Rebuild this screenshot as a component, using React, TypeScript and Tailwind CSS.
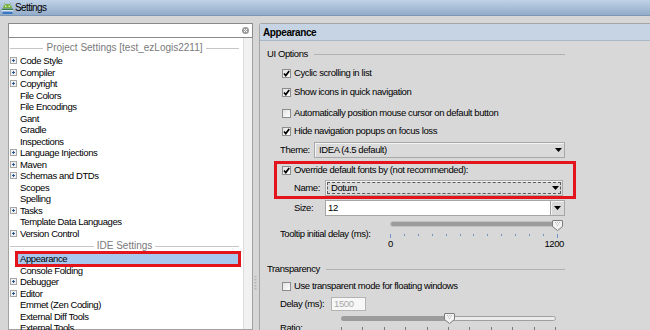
import React from 'react';

type Item = { label: string; expand?: boolean; selected?: boolean };

const projectItems: Item[] = [
  { label: 'Code Style', expand: true },
  { label: 'Compiler', expand: true },
  { label: 'Copyright', expand: true },
  { label: 'File Colors' },
  { label: 'File Encodings' },
  { label: 'Gant' },
  { label: 'Gradle' },
  { label: 'Inspections' },
  { label: 'Language Injections', expand: true },
  { label: 'Maven', expand: true },
  { label: 'Schemas and DTDs', expand: true },
  { label: 'Scopes' },
  { label: 'Spelling' },
  { label: 'Tasks', expand: true },
  { label: 'Template Data Languages' },
  { label: 'Version Control', expand: true },
];

const ideItems: Item[] = [
  { label: 'Appearance', selected: true },
  { label: 'Console Folding' },
  { label: 'Debugger', expand: true },
  { label: 'Editor', expand: true },
  { label: 'Emmet (Zen Coding)' },
  { label: 'External Diff Tools' },
  { label: 'External Tools' },
];

function AppIcon() {
  return (
    <svg width="13" height="13" viewBox="0 0 13 13" className="shrink-0">
      <path d="M2 7.2a4.5 4.3 0 0 1 9 0z" fill="#78b33a" />
      <path d="M3.6 2.4l1 1.2M9.4 2.4l-1 1.2" stroke="#5c8f26" strokeWidth="0.8" />
      <circle cx="4.8" cy="5.3" r="0.7" fill="#fff" />
      <circle cx="8.2" cy="5.3" r="0.7" fill="#fff" />
      <rect x="1" y="7.6" width="11" height="1.6" fill="#3f7a4f" />
      <rect x="1" y="9.2" width="11" height="1.4" fill="#eef3f8" />
      <rect x="1.5" y="10.6" width="10" height="2.4" fill="#3b78c4" />
    </svg>
  );
}

function Plus() {
  return (
    <svg width="7" height="7" viewBox="0 0 7 7" className="shrink-0">
      <rect x="0.5" y="0.5" width="6" height="6" fill="#f2f2f2" stroke="#a6a6a6" />
      <path d="M2 3.5h3M3.5 2v3" stroke="#2b5797" strokeWidth="1" />
    </svg>
  );
}

function Arrow() {
  return (
    <svg width="7" height="4" viewBox="0 0 7 4" className="shrink-0">
      <path d="M0 0h7L3.5 4z" fill="#000" />
    </svg>
  );
}

function CheckBox({ checked }: { checked?: boolean }) {
  return (
    <span className="flex h-[9px] w-[9px] shrink-0 items-center justify-center border border-[#8c8c8c] bg-linear-to-br from-[#e2e2e2] to-white">
      {checked && (
        <svg width="7" height="7" viewBox="0 0 7 7">
          <path d="M1 3.5l1.8 2.1L6.2 1" fill="none" stroke="#000" strokeWidth="1.7" />
        </svg>
      )}
    </span>
  );
}

function Thumb() {
  return (
    <svg width="11" height="11" viewBox="0 0 11 11">
      <path d="M1 0.5h9a0.5 0.5 0 0 1 .5.5v5.5L5.5 10.5 0.5 6.5V1a0.5 0.5 0 0 1 .5-.5z" fill="#f2f2f2" stroke="#7c7c7c" />
      <path d="M3 2.5h1M5 2.5h1M7 2.5h1M4 4h1M6 4h1M5 5.5h1" stroke="#bdbdbd" strokeWidth="1" />
    </svg>
  );
}

function TreeHeader({ label }: { label: string }) {
  return (
    <div className="flex h-[14px] shrink-0 items-center gap-[3px] pl-[1px] pr-[4px] text-[10px] tracking-normal text-[#7a7a7a]">
      <span className="h-px flex-1 bg-[#c6c6c6]" />
      <span className="leading-[12px]">{label}</span>
      <span className="h-px flex-1 bg-[#c6c6c6]" />
    </div>
  );
}

function TreeRow({ item }: { item: Item }) {
  return (
    <div className="relative flex h-[11.5px] shrink-0 items-center">
      {item.selected && (
        <div className="absolute bottom-[-2.25px] left-[6px] top-[-2.25px] w-[226px] border-[3px] border-[#e3141c] bg-[#a8c8ee]" />
      )}
      <div className="relative flex items-center gap-[3px] pl-[1px]">
        {item.expand ? <Plus /> : <span className="w-[7px]" />}
        <span className="leading-[11px]">{item.label}</span>
      </div>
    </div>
  );
}

function CheckRow({ label, checked, className = '' }: { label: string; checked?: boolean; className?: string }) {
  return (
    <div className={`flex h-[14px] shrink-0 items-center gap-[3px] pl-[22px] ${className}`}>
      <CheckBox checked={checked} />
      <span className="leading-[12px]">{label}</span>
    </div>
  );
}

function Section({ label, className = '' }: { label: string; className?: string }) {
  return (
    <div className={`flex h-[14px] shrink-0 items-center gap-[6px] pl-[7px] ${className}`}>
      <span className="leading-[12px]">{label}</span>
      <span className="h-px flex-1 bg-[#b2b2b2]" />
    </div>
  );
}

function Combo({ text, focus, className = '' }: { text: string; focus?: boolean; className?: string }) {
  return (
    <div className={`flex h-[16px] items-center border border-[#a9a9a9] bg-[#dadada] shadow-[inset_1px_1px_0_#f3f3f3] ${className}`}>
      <div
        className={`m-[1px] flex h-[12px] flex-1 items-center pr-[1px] ${
          focus ? 'border border-dashed border-[#5a5a5a] pl-[3px]' : 'pl-[3px]'
        }`}
      >
        <span className="flex-1 leading-[12px]">{text}</span>
        <Arrow />
      </div>
    </div>
  );
}

export default function App() {
  return (
    <div className="flex h-[330px] w-[650px] flex-col overflow-hidden bg-[#d6d6d6] font-['Liberation_Sans',Arial,sans-serif] text-[9.5px] tracking-[-0.4px] text-black">
      {/* title bar */}
      <div className="flex h-[16px] shrink-0 items-center gap-[1px] border-b border-[#8097b4] bg-linear-to-b from-[#c0d2e7] to-[#93acca] pl-[1px]">
        <AppIcon />
        <span className="text-[10px] leading-[12px] tracking-[-0.6px]">Settings</span>
      </div>

      <div className="flex min-h-0 flex-1 pt-[7px]">
        {/* left column */}
        <div className="ml-[8px] flex w-[245px] shrink-0 flex-col">
          <div className="flex h-[15px] shrink-0 items-center justify-end border border-[#8a8a8a] bg-white pr-[3px]">
            <svg width="7" height="7" viewBox="0 0 7 7">
              <circle cx="3.5" cy="3.5" r="3.5" fill="#9b9b9b" />
              <path d="M2 2l3 3M5 2L2 5" stroke="#fff" strokeWidth="1" />
            </svg>
          </div>
          <div className="flex min-h-0 flex-1 border-x border-b border-[#a2a2a2] bg-white">
            <div className="flex flex-1 flex-col pt-[3px]">
              <TreeHeader label="Project Settings [test_ezLogis2211]" />
              {projectItems.map((it) => (
                <TreeRow key={it.label} item={it} />
              ))}
              <TreeHeader label="IDE Settings" />
              {ideItems.map((it) => (
                <TreeRow key={it.label} item={it} />
              ))}
            </div>
            <div className="w-[9px] border-l border-[#dedede] bg-[#f1f1f1]" />
          </div>
        </div>

        {/* splitter */}
        <div className="w-[6px] shrink-0 pl-[1px] pt-[253px]">
          <svg width="3" height="14" viewBox="0 0 3 14">
            {[0, 3, 6, 9, 12].map((y) => (
              <rect key={y} x="0.5" y={y} width="2" height="1.5" fill="#b5b5b5" />
            ))}
          </svg>
        </div>

        {/* right panel */}
        <div className="flex min-w-0 flex-1 flex-col rounded-tl-[3px] border-l border-t border-[#a5a5a5] bg-[#d8d8d8]">
          <div className="flex h-[17px] shrink-0 items-center border-b border-[#aab7c6] bg-[#c7d4e3] pl-[3px] text-[10px] font-bold">
            Appearance
          </div>
          <div className="flex w-[305px] shrink-0 flex-col">
            <Section label="UI Options" className="mt-[6px]" />
            <CheckRow label="Cyclic scrolling in list" checked className="mt-[5px]" />
            <CheckRow label="Show icons in quick navigation" checked className="mt-[5px]" />
            <CheckRow label="Automatically position mouse cursor on default button" className="mt-[7px]" />
            <CheckRow label="Hide navigation popups on focus loss" checked className="mt-[4px]" />

            <div className="mt-[4px] flex h-[16px] shrink-0 items-center pl-[20px]">
              <span className="w-[34px] leading-[12px]">Theme:</span>
              <Combo text="IDEA (4.5 default)" className="flex-1" />
            </div>

            <div className="relative mt-[5px] shrink-0">
              <CheckRow label="Override default fonts by (not recommended):" checked />
              <div className="mt-[3px] flex h-[16px] items-center pl-[34px]">
                <span className="w-[31px] leading-[12px]">Name:</span>
                <Combo text="Dotum" focus className="w-[238px]" />
              </div>
              <div className="pointer-events-none absolute left-[14px] top-[-2px] h-[38px] w-[302px] border-[3px] border-[#e3141c]" />
            </div>

            <div className="mt-[4px] flex h-[16px] shrink-0 items-center pl-[34px]">
              <span className="w-[31px] leading-[12px]">Size:</span>
              <div className="flex h-full w-[226px] items-center border border-[#a6a6a6] bg-white pl-[2px]">
                <span className="leading-[12px]">12</span>
              </div>
              <div className="flex h-full w-[14px] items-center justify-center border border-l-0 border-[#a6a6a6] bg-[#dadada] shadow-[inset_1px_1px_0_#f3f3f3]">
                <Arrow />
              </div>
            </div>

            <div className="mt-[2px] flex h-[31px] shrink-0 items-center pl-[20px]">
              <span className="w-[109px] leading-[12px]">Tooltip initial delay (ms):</span>
              <div className="relative h-full w-[176px]">
                <div className="ml-[1px] mt-[3px] h-[6px] w-[168px] rounded-full border border-[#c2c2c2] bg-[#9c9c9c]" />
                <div className="absolute left-[163px] top-[2px]">
                  <Thumb />
                </div>
                <div className="ml-[1px] mt-[7px] flex h-[4px] w-[168px] items-start justify-between">
                  {Array.from({ length: 13 }).map((_, i) => (
                    <span
                      key={i}
                      className={`w-px bg-[#6f93c3] ${i === 0 || i === 12 ? 'h-[4px]' : 'h-[2px]'}`}
                    />
                  ))}
                </div>
                <div className="ml-[-1px] flex h-[11px] w-[176px] justify-between leading-[11px]">
                  <span>0</span>
                  <span>1200</span>
                </div>
              </div>
            </div>

            <Section label="Transparency" className="mt-[13px]" />
            <CheckRow label="Use transparent mode for floating windows" className="mt-[3px]" />

            <div className="mt-[3px] flex h-[15px] shrink-0 items-center pl-[20px]">
              <span className="w-[51px] leading-[12px]">Delay (ms):</span>
              <div className="flex h-[14px] w-[35px] items-center border border-[#b3b3b3] bg-[#f7f7f7] pl-[2px] text-[#a8a8a8]">
                <span className="leading-[12px]">1500</span>
              </div>
            </div>

            <div className="mt-[2px] flex shrink-0 pl-[20px]">
              <span className="w-[61px] pt-[9px] leading-[11px]">Ratio:</span>
              <div className="relative w-[216px]">
                <div className="mt-[3px] flex h-[5px] w-[215px]">
                  <span className="w-[108px] rounded-l-full bg-[#9c9c9c]" />
                  <span className="flex-1 rounded-r-full border border-[#a0a0a0] bg-[#ececec]" />
                </div>
                <div className="absolute left-[103px] top-0">
                  <Thumb />
                </div>
                <div className="mt-[6px] flex h-[4px] w-[215px] items-start justify-between">
                  {Array.from({ length: 11 }).map((_, i) => (
                    <span key={i} className="h-[4px] w-px bg-[#7a7a7a]" />
                  ))}
                </div>
              </div>
            </div>
          </div>
        </div>
      </div>
    </div>
  );
}
